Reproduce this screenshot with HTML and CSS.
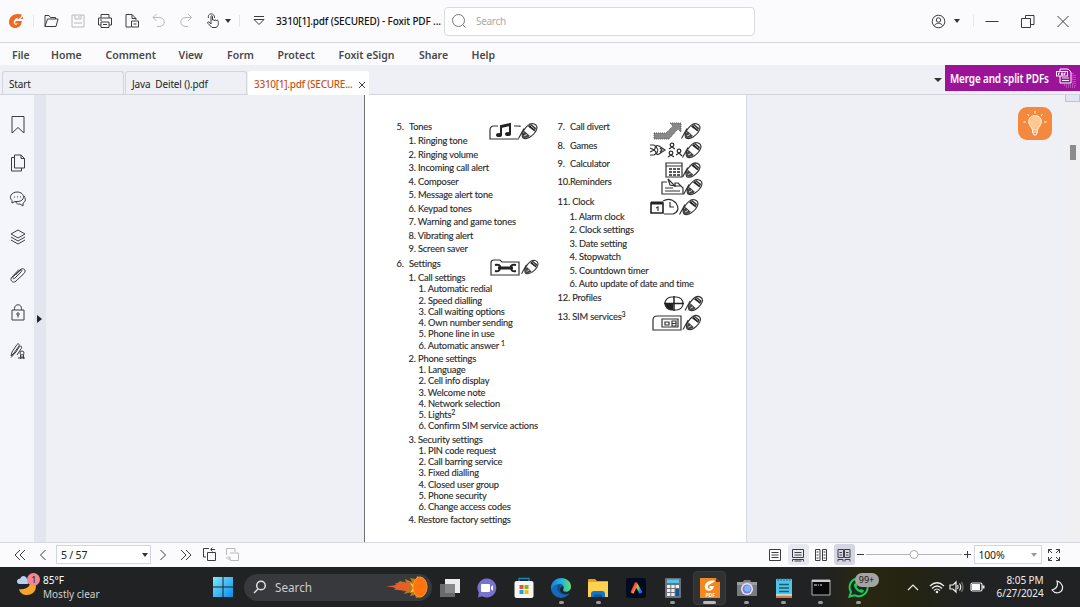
FILE: index.html
```html
<!DOCTYPE html>
<html lang="en">
<head>
<meta charset="utf-8">
<title>3310[1].pdf (SECURED) - Foxit PDF Reader</title>
<link rel="stylesheet" href="styles.css">
</head>
<body>
<svg class="defs" width="0" height="0">
  <symbol id="phone" viewBox="0 0 20 18">
    <path d="M0 17L7 5Q10 1 14 1Q19 1 19.500 6Q19 11 13 15Q9 18 4 17Z" fill="#fff"/>
    <path d="M.5 16.500L6 6.500M5 16Q3 13 6 8Q10 2 14 1.500Q19 2 19 6Q18 11 12 15Q8 17.500 5 16Z" fill="none" stroke="#333" stroke-width="1.200"/>
    <path d="M10 4.500L13 2L18 6L16.500 9.500Z" fill="#222"/>
    <path d="M4.500 15.500Q4 12 6.500 9L12 14Q8 17 4.500 15.500Z" fill="#444"/>
    <path d="M6 14L9 12.500M12.500 3.500L16.500 7" stroke="#fff" stroke-width=".8"/>
  </symbol>
</svg>

<header class="titlebar">
  <svg class="logo" width="16" height="16" viewBox="0 0 16 16"><path d="M14 1.500C7-.5 1 3 1 9c0 3.500 2.500 6 6 6 4 0 6-2 7-7H8L6.500 10.500H10C9 12 7.500 12 6.800 11.500 4.500 10 6 5.500 10 4.500L9 6.500C11 6 12.500 5 14 1.500Z" fill="#ee6a22"/><path d="M12.500 6L15 3.500V6Z" fill="#ee6a22"/></svg>
  <i class="sep"></i>
  <div class="tools">
    <svg class="ic" width="16" height="16" viewBox="0 0 16 16"><path d="M2 13.500V2.500H6L7.500 4.500H12.500V6M2 13.500L4.500 6H15L13 13.500Z"/></svg>
    <svg class="ic off" width="16" height="16" viewBox="0 0 16 16"><path d="M2 2H14V14H2ZM5 2V6H11V2M4 10H12M9 3V5"/></svg>
    <svg class="ic" width="16" height="16" viewBox="0 0 16 16"><path d="M4 5V1.500H12V5M4 12H1.500V5H14.500V12H12M4 9H12V14.500H4ZM3 7H5M6 11.500H10"/></svg>
    <svg class="ic" width="16" height="16" viewBox="0 0 16 16"><path d="M7 14H2V1.500H8L12 5.500V7M8 1.500V5.500H12M7.500 8H14.500V14H7.500ZM9.500 11H12.500"/></svg>
    <svg class="ic off" width="16" height="16" viewBox="0 0 16 16"><path d="M5.500 1L2 4.500 5.500 8M2 4.500H8C15 4.500 15 13.500 8 13.500H6"/></svg>
    <svg class="ic off" width="16" height="16" viewBox="0 0 16 16"><path d="M10 1L13.500 4.500 10 8M13.500 4.500H8C1 4.500 1 13.500 8 13.500H10"/></svg>
    <svg class="ic" width="16" height="16" viewBox="0 0 16 16"><path d="M6 11L4 9C3 8.500 2 9.500 3 10.500L7 14.500H11C14 13 13.500 10 13 7.500 12 6.500 11.500 7.500 11.500 8 11 6.500 9.500 6.500 9.500 8 9 6.500 7.500 6.500 7.500 7V3.500C7.500 2.500 6 2.500 6 3.500ZM3.500 5C2-.5 10-.5 9.500 5"/></svg>
  </div>
  <i class="caret"></i>
  <i class="sep s2"></i>
  <svg class="ic menu-ic" width="14" height="12" viewBox="0 0 14 12"><path d="M2 1.500H12M2 4.500L7 9.500 12 4.500Z"/></svg>
  <span class="doc-title">3310[1].pdf (SECURED) - Foxit PDF ...</span>
  <div class="search"><svg class="ic" width="16" height="16" viewBox="0 0 16 16"><circle cx="7.500" cy="7.500" r="6"/><path d="M12 12L14.500 14.500"/></svg><span>Search</span></div>
  <div class="window">
    <svg class="ic" width="15" height="15" viewBox="0 0 15 15"><circle cx="7.500" cy="7.500" r="6.300"/><circle cx="7.500" cy="6" r="2.200"/><path d="M3.500 11.500C5 8.500 10 8.500 11.500 11.500"/></svg>
    <i class="caret"></i><i class="sep"></i>
    <svg class="ic" width="14" height="15" viewBox="0 0 14 15"><path d="M.5 7.500H13.500"/></svg>
    <svg class="ic" width="15" height="15" viewBox="0 0 15 15"><path d="M1.500 4.500H10.500V13.500H1.500ZM5.500 4.500V1.500H14V10.500H10.500"/></svg>
    <svg class="ic" width="14" height="15" viewBox="0 0 14 15"><path d="M1.500 2L12.500 13M12.500 2L1.500 13"/></svg>
  </div>
</header>

<nav class="menu"><span>File</span><span>Home</span><span>Comment</span><span>View</span><span>Form</span><span>Protect</span><span>Foxit eSign</span><span>Share</span><span>Help</span></nav>

<div class="tabs">
  <div class="tab">Start</div>
  <div class="tab">Java&nbsp; Deitel ().pdf</div>
  <div class="tab active"><span>3310[1].pdf (SECURE...</span><svg class="ic" width="8" height="8" viewBox="0 0 8 8"><path d="M1 1L7 7M7 1L1 7"/></svg></div>
  <i class="caret"></i>
  <div class="promo"><span>Merge and split PDFs</span>
    <svg width="20" height="20" viewBox="0 0 20 20" fill="none" stroke="#fff"><path d="M4 1H12L15 4V15H4Z"/><path d="M17 5V17H7M19 7V19H9" stroke-dasharray="1 1" opacity=".5"/><rect x=".5" y="3.500" width="11" height="4.500" fill="#9b1399"/><path d="M2.500 7V5H4M5.500 5V7H7V5ZM8.500 7V5H10M6 10H13M6 12.500H13" stroke-width=".9"/></svg>
  </div>
</div>

<main class="work">
  <aside class="side">
    <svg class="ic" width="16" height="20" viewBox="0 0 16 20"><path d="M2 1.500H14V18L8 12.500 2 18Z"/></svg>
    <svg class="ic" width="16" height="20" viewBox="0 0 16 20"><path d="M4.500 2H11L14.500 5.500V15H4.500ZM11 2V5.500H14.500M4.500 4.500H1.500V18H11.500V15"/></svg>
    <svg class="ic" width="18" height="20" viewBox="0 0 18 20"><path d="M3 12V9.500C-1 6 3 1 8 1 16 1 17 10 9 10.500H6ZM5 6H6M8 6H9M11 6H12M15 5C18 9 15 12 14 12V15L11 13C9 13.500 7 12.500 7 11"/></svg>
    <svg class="ic" width="18" height="20" viewBox="0 0 18 20"><path d="M9 2L16 6 9 10 2 6ZM2 9L9 13 16 9M2 12L9 16 16 12"/></svg>
    <svg class="ic" width="18" height="20" viewBox="0 0 18 20"><path d="M12 6L6 12C4.500 13.500 3 12 4.500 10.500L11 4C14 1 18 4 15 7.500L7 15C4 18 0 14 3 11L10 3.500M12 6C13.500 4 12.500 3 11 4.500L6.500 9"/></svg>
    <svg class="ic" width="16" height="20" viewBox="0 0 16 20"><path d="M2 6H14V16H2ZM4.500 6V4.500C4.500-.5 11.500-.5 11.500 4.500V6M8 11V13.500"/><circle cx="8" cy="10" r="1.200"/></svg>
    <svg class="ic" width="18" height="20" viewBox="0 0 18 20"><path d="M2 14L3 10 8 2.500C9 1 11 2 10 4L5 11ZM2 15.500L7 10 10.500 4.500C13 3 13 6 12 7L8 13"/><circle cx="13" cy="11" r="2"/><path d="M11.500 13V16.500L13 14.500 14.500 16.500V13M9 16H16"/></svg>
  </aside>
  <div class="strip"><i></i></div>
  <div class="canvas">
    <article class="page">
      <section class="col left">
        <div class="h"><b>5.</b>Tones
          <svg class="fig f1" width="50" height="18" viewBox="0 0 50 18"><path d="M31 5V4H25M9 4H5Q1 4 1 8V17H30" class="ln"/><path d="M12 13V4L21 2V12M12 5L21 3" stroke="#222" stroke-width="2" fill="none"/><ellipse cx="10" cy="13" rx="3" ry="2"/><ellipse cx="19" cy="12" rx="3" ry="2"/><use href="#phone" x="29" width="20" height="18"/></svg></div>
        <ol class="l2"><li>1. Ringing tone</li><li>2. Ringing volume</li><li>3. Incoming call alert</li><li>4. Composer</li><li>5. Message alert tone</li><li>6. Keypad tones</li><li>7. Warning and game tones</li><li>8. Vibrating alert</li><li>9. Screen saver</li></ol>
        <div class="h tall"><b>6.</b>Settings
          <svg class="fig f2" width="50" height="17" viewBox="0 0 50 17"><path d="M1 16V4Q1 1 4 1H10L12 3H29V16Z" class="ln"/><path d="M8 9H23" stroke="#222" stroke-width="3"/><path d="M5 6Q11 5 10 9Q10 13 5 12M26 6Q20 5 21 9Q21 13 26 12" stroke="#222" stroke-width="2" fill="none"/><use href="#phone" x="30" width="20" height="16"/></svg></div>
        <div class="sub">1. Call settings</div>
        <ol class="l3"><li>1. Automatic redial</li><li>2. Speed dialling</li><li>3. Call waiting options</li><li>4. Own number sending</li><li>5. Phone line in use</li><li>6. Automatic answer <sup>1</sup></li></ol>
        <div class="sub">2. Phone settings</div>
        <ol class="l3"><li>1. Language</li><li>2. Cell info display</li><li>3. Welcome note</li><li>4. Network selection</li><li>5. Lights<sup>2</sup></li><li>6. Confirm SIM service actions</li></ol>
        <div class="sub">3. Security settings</div>
        <ol class="l3"><li>1. PIN code request</li><li>2. Call barring service</li><li>3. Fixed dialling</li><li>4. Closed user group</li><li>5. Phone security</li><li>6. Change access codes</li></ol>
        <div class="sub">4. Restore factory settings</div>
      </section>
      <section class="col right">
        <div class="h"><b>7.</b>Call divert
          <svg class="fig g1" width="50" height="18" viewBox="0 0 50 18"><path d="M1 11H13L20 4L17 1H28V10L25 7L16 17H1Z" fill="#888" stroke="#555" stroke-dasharray="1 1"/><use href="#phone" x="28" width="20" height="18"/></svg></div>
        <div class="h m4"><b>8.</b>Games
          <svg class="fig g2" width="54" height="18" viewBox="0 0 54 18"><path d="M1 4H5Q8 5 5 9Q9 12 5 14H1M1 7L5 9 1 11M9 9Q5 3 10 5L16 9 10 13Q6 15 9 9M11 7L13 9 11 11" class="ln"/><g fill="none" stroke="#333" stroke-width="1.300"><circle cx="23" cy="4" r="1.800"/><path d="M20 8L23 6 26 8"/><circle cx="22" cy="12" r="1.800"/><path d="M19 16L22 14 25 16"/><circle cx="30" cy="10" r="1.800"/><path d="M27 14L30 12 33 15"/></g><use href="#phone" x="33" width="20" height="18"/></svg></div>
        <div class="h m3"><b>9.</b>Calculator
          <svg class="fig g3" width="38" height="18" viewBox="0 0 38 18"><path d="M1 2H17V16H1ZM1 5H17" class="ln"/><path d="M4 8H15M4 11H15M4 14H15" stroke="#222" stroke-width="1.500" stroke-dasharray="3 1"/><use href="#phone" x="17" width="19" height="18"/></svg></div>
        <div class="h m35"><b>10.</b>Reminders
          <svg class="fig g4" width="44" height="18" viewBox="0 0 44 18"><path d="M6 4H1V16H22V10L17 5H14V8H20M4 10H12M4 13H19" class="ln"/><path d="M7 1L14 8L9 7Z" class="ln"/><use href="#phone" x="22" width="20" height="18"/></svg></div>
        <div class="h m5"><b>11.</b>&nbsp;Clock
          <svg class="fig g5" width="52" height="18" viewBox="0 0 52 18"><path d="M1 5H13V15H1Z" fill="none" stroke="#222" stroke-width="1.600"/><path d="M1 5H13" stroke="#222" stroke-width="3"/><path d="M6 10L8 9V13M13 3Q20-1 26 5Q31 13 23 16H14M20 4V9H24" class="ln"/><use href="#phone" x="29" width="20" height="18"/></svg></div>
        <ol class="l2"><li>1. Alarm clock</li><li>2. Clock settings</li><li>3. Date setting</li><li>4. Stopwatch</li><li>5. Countdown timer</li><li>6. Auto update of date and time</li></ol>
        <div class="h"><b>12.</b>&nbsp;Profiles
          <svg class="fig g6" width="42" height="17" viewBox="0 0 42 17"><rect x="1" y="2" width="18" height="13" rx="6.500" class="ln"/><path d="M1 9H9V15Q2 15 1 9"/><path d="M10 1V16M0 8.500H20" stroke="#222" stroke-width="1.500"/><use href="#phone" x="20" width="20" height="17"/></svg></div>
        <div class="h m4"><b>13.</b>&nbsp;SIM services<sup>3</sup>
          <svg class="fig g7" width="52" height="17" viewBox="0 0 52 17"><path d="M1 16V6Q1 2 5 2H29V16ZM10 5H26V13H10Z" class="ln"/><path d="M13 8H17V11H13ZM20 7H24V12H20ZM20 9.500H24" class="ln"/><use href="#phone" x="30" width="20" height="17"/></svg></div>
      </section>
    </article>
    <div class="hint"><svg width="34" height="33" viewBox="0 0 34 33"><path d="M17 8.500C10 8.500 9 16 13 20L14.500 23H19.500L21 20C25 16 24 8.500 17 8.500Z" fill="#ffc891" stroke="#fff" stroke-width=".8"/><path d="M14.500 23V25L16 28H18L19.500 25V23M14.500 25H19.500M17 4V6.500M9.500 7L11 9M24.500 7L23 9M5.500 15H8M26 15H28.500" fill="none" stroke="#fff"/></svg></div>
  </div>
  <div class="scroll"><i class="top"></i><i class="thumb"></i></div>
</main>

<footer class="status">
  <svg class="ic" width="12" height="14" viewBox="0 0 12 14"><path d="M6 2L1 7 6 12M11 2L6 7 11 12"/></svg>
  <svg class="ic p2" width="8" height="14" viewBox="0 0 8 14"><path d="M6.500 2L1.500 7 6.500 12"/></svg>
  <div class="box pages">5 / 57<i class="caret"></i></div>
  <svg class="ic p3" width="8" height="14" viewBox="0 0 8 14"><path d="M1.500 2L6.500 7 1.500 12"/></svg>
  <svg class="ic p4" width="12" height="14" viewBox="0 0 12 14"><path d="M1 2L6 7 1 12M6 2L11 7 6 12"/></svg>
  <svg class="ic p5" width="15" height="15" viewBox="0 0 15 15"><path d="M5.500 5.500H13.500V13.500H5.500ZM4 10H1.500V1.500H7M13 2.500H9M10.500 .5L8.500 2.500 10.500 4.500"/></svg>
  <svg class="ic off p6" width="15" height="15" viewBox="0 0 15 15"><path d="M5 6H13.500V13.500H5.500V12M1.500 8V1.500H10V5M1 11H5M3.500 9L5.500 11 3.500 13"/></svg>
  <div class="views">
    <i><svg class="ic" width="14" height="14" viewBox="0 0 14 14"><path d="M1.500 1.500H12.500V12.500H1.500ZM3.500 4.500H10.500M3.500 7H10.500M3.500 9.500H10.500"/></svg></i>
    <i class="soft"><svg class="ic" width="14" height="14" viewBox="0 0 14 14"><path d="M1.500 1.500H12.500V9.500H1.500ZM3.500 4.500H10.500M3.500 7H10.500M1.500 13.500V11.500H12.500V13.500M3.500 13H10.500"/></svg></i>
    <i><svg class="ic" width="14" height="14" viewBox="0 0 14 14"><path d="M1.500 1.500H6V12.500H1.500ZM8.500 1.500H12.500V12.500H8.500ZM2.500 4H4.500M2.500 7H4.500M2.500 10H4.500M9.500 4H11.500M9.500 7H11.500M9.500 10H11.500"/></svg></i>
    <i class="on"><svg class="ic" width="14" height="14" viewBox="0 0 14 14"><path d="M1 1.500H6.500V9.500H1ZM7.500 1.500H13V9.500H7.500ZM2.500 4.500H5M2.500 7H5M9 4.500H11.500M9 7H11.500M1 13.500V11.500H6V13.500M8 13.500V11.500H13V13.500"/></svg></i>
  </div>
  <svg class="ic zoom" width="116" height="14" viewBox="0 0 116 14"><path d="M1 6.500H8M108 6.500H115M111.500 3V10"/><path d="M10 6.500H106" stroke="#b4b4bc"/><circle cx="58" cy="6.500" r="4" fill="#fff" stroke="#aaa"/></svg>
  <div class="box percent">100%<i class="caret"></i></div>
  <svg class="ic full" width="14" height="14" viewBox="0 0 14 14"><path d="M5 5L1.500 1.500V5M1.500 1.500H5M9 5L12.500 1.500V5M12.500 1.500H9M5 9L1.500 12.500V9M1.500 12.500H5M9 9L12.500 12.500V9M12.500 12.500H9"/></svg>
</footer>

<div class="taskbar">
  <div class="weather">
    <svg width="24" height="24" viewBox="0 0 24 24"><path d="M3 16C10 17 15 14 15 6 23 10 21 22 11 22 7 22 4 20 3 16Z" fill="#f5a52a"/><path d="M3 11C-1 9 2 5 4 6 5 2 10 2 11 6 14 6 14 11 11 11Z" fill="#b7cff5"/><circle cx="17.500" cy="6.500" r="6.500" fill="#f58690"/><text x="15.300" y="10" class="n1">1</text></svg>
    <div><p class="temp">85°F</p><p>Mostly clear</p></div>
  </div>
  <svg class="win" width="20" height="20" viewBox="0 0 20 20"><defs><linearGradient id="w" x2="1" y2="1"><stop stop-color="#7deaff"/><stop offset="1" stop-color="#0a8bea"/></linearGradient></defs><path d="M0 0H9.500V9.500H0ZM10.500 0H20V9.500H10.500ZM0 10.500H9.500V20H0ZM10.500 10.500H20V20H10.500Z" fill="url(#w)"/></svg>
  <div class="find">
    <svg width="14" height="14" viewBox="0 0 14 14" fill="none" stroke="#e0e0e0" stroke-width="1.500"><circle cx="8" cy="5.500" r="4.300"/><path d="M5 9L1 13"/></svg><span>Search</span>
    <svg class="comet" width="44" height="24" viewBox="0 0 44 24"><path d="M8 12L15 6 21 8 20 4 27 7 25 3 31 4 32 1 37 3V22L31 23 30 20 25 21 27 17 19 19 21 16 13 15Z" fill="#d58b1e" opacity=".8"/><path d="M1 11.500L12 10 10 8 20 9 18 6 26 11 18 17 20 14 9 15 12 12.500Z" fill="#ef5a2b"/><path d="M25 8L30 10V16L25 18 28 13Z" fill="#ffc233"/><ellipse cx="35" cy="12" rx="7" ry="10" fill="#ff7410" stroke="#ff9a22"/></svg>
  </div>
  <div class="apps">
    <span><svg width="22" height="22" viewBox="0 0 22 22"><path d="M6 2H21V16H6Z" fill="#ececec"/><path d="M1 7H16V20H1Z" fill="#777" opacity=".85"/></svg></span>
    <span><svg width="22" height="22" viewBox="0 0 22 22"><path d="M11 1.500A9.500 9.500 0 1 1 6 19.200L2 20.500 2.800 15.800A9.500 9.500 0 0 1 11 1.500Z" fill="#7773ce"/><rect x="5" y="7" width="9" height="8" rx="1" fill="#fff"/><path d="M15 10L17 8V14L15 12Z" fill="#fff"/></svg></span>
    <span><svg width="22" height="22" viewBox="0 0 22 22"><path d="M6 5V1.500H16V5" fill="none" stroke="#1687be" stroke-width="1.300"/><rect x="1.500" y="4" width="19" height="17" rx="2" fill="#f5f5f5"/><path d="M6.500 8H10.500V12H6.500Z" fill="#ef5024"/><path d="M11.500 8H15.500V12H11.500Z" fill="#7eb91b"/><path d="M6.500 13H10.500V17H6.500Z" fill="#16a2e7"/><path d="M11.500 13H15.500V17H11.500Z" fill="#f7b919"/></svg></span>
    <span class="run"><svg width="22" height="22" viewBox="0 0 22 22"><defs><linearGradient id="e"><stop stop-color="#1683d4"/><stop offset=".5" stop-color="#22b3dd"/><stop offset="1" stop-color="#65dd65"/></linearGradient></defs><circle cx="11" cy="11" r="10" fill="#136ab8"/><path d="M1 11C1-1 20-2 21 9 21 16 14 15 13 13 15 10 13 6 9 7 5 7 1 10 1 15Z" fill="url(#e)"/><path d="M9 7C5 9 7 18 15 18 18 18 19 17 20 15 12 18 8 12 11 8Z" fill="#174d92"/><path d="M12 9C15 10 12 13 13.500 14.500 16 16 19 15 21 12V16L15 17C9 16 9 11 12 9Z" fill="#202224"/></svg></span>
    <span class="run"><svg width="22" height="22" viewBox="0 0 22 22"><path d="M1 3Q1 2 2 2H8L10 4H21V20H1Z" fill="#e7a019"/><path d="M1 5H21V20H1Z" fill="#ffd150"/><path d="M4 20V17Q4 14 7 14H15Q18 14 18 17V20Z" fill="#1276c5"/><path d="M7 17.500H15V20H7Z" fill="#0b559c"/></svg></span>
    <span><svg width="22" height="22" viewBox="0 0 22 22"><defs><linearGradient id="r" x2="1" y2=".6"><stop stop-color="#f23ac8"/><stop offset=".3" stop-color="#ff4433"/><stop offset=".55" stop-color="#ffa321"/><stop offset=".75" stop-color="#45d66c"/><stop offset="1" stop-color="#3566ff"/></linearGradient></defs><rect x="1" y="1" width="20" height="20" rx="3" fill="#020a20"/><path d="M7 16L11 7 16 16" fill="none" stroke="url(#r)" stroke-width="3.300" stroke-linejoin="round"/></svg></span>
    <span class="run"><svg width="22" height="22" viewBox="0 0 22 22"><rect x="3" y="1" width="16" height="20" rx="1" fill="#6d7278"/><path d="M5 2.500H17V6H5Z" fill="#52c7ed"/><path d="M5 8H8.300V11H5ZM9.300 8H12.600V11H9.300ZM13.600 8H17V11H13.600ZM5 12H8.300V15H5ZM9.300 12H12.600V15H9.300ZM5 16H8.300V19H5ZM9.300 16H12.600V19H9.300Z" fill="#eee"/><path d="M13.600 12H17V19H13.600Z" fill="#15539b"/></svg></span>
    <span class="run current"><svg width="22" height="22" viewBox="0 0 22 22"><path d="M1 1H17L21 5V21H1Z" fill="#f28820"/><path d="M17 1V5H21Z" fill="#573815"/><path d="M16 4C9 2 5 7 6 11 7 15 14 15 15 9H11L10 11H12C10 13 8 11 9 9 10 7 13 7 16 4Z" fill="#fff"/><text x="6.500" y="20" class="pdf">PDF</text></svg></span>
    <span class="run"><svg width="22" height="22" viewBox="0 0 22 22"><path d="M1 5H7L8 3H14L15 5H21V19H1Z" fill="#777c82"/><path d="M1 5H21V8H1Z" fill="#9a9ea2"/><circle cx="11" cy="12" r="6" fill="#e8e8f4"/><circle cx="11" cy="12" r="4.500" fill="#8175df"/><circle cx="11.500" cy="11.500" r="3.200" fill="#7fb7f6"/></svg></span>
    <span class="run"><svg width="22" height="22" viewBox="0 0 22 22"><path d="M3 2H19V19H3Z" fill="#52c4e7"/><path d="M3 18H19V21H3Z" fill="#e5752d"/><path d="M3 18H19" stroke="#fff"/><path d="M5 1V4M8 1V4M11 1V4M14 1V4M17 1V4" stroke="#176882"/><path d="M6 7.500H16M6 11H16M6 14.500H16" stroke="#115d76" stroke-width="1.300"/></svg></span>
    <span class="run"><svg width="22" height="22" viewBox="0 0 22 22"><path d="M2 3H20V18H2Z" fill="#080808" stroke="#b4b4b4"/><path d="M2 4H20" stroke="#ccc" stroke-width="2"/><path d="M4 8H7M8 8H9M10 8H12" stroke="#eee"/></svg></span>
    <span class="run"><svg width="22" height="22" viewBox="0 0 22 22"><path d="M2.500 19.500L4 15A9 9 0 1 1 7.500 18.200Z" fill="#182c20" stroke="#20c85b" stroke-width="2"/><path d="M7 7L9 6 10.500 9 9.500 10Q11 12 13 13L14 12 17 13.500 16 15.500C12 17 6 11 7 7Z" fill="#20c85b"/></svg><em>99+</em></span>
  </div>
  <svg class="tray" width="80" height="16" viewBox="0 0 80 16" fill="none" stroke="#eee" stroke-width="1.200"><path d="M1 11L6 6 11 11"/><path d="M23 7Q30 .5 37 7M25 9.500Q30 4.500 35 9.500M27 11.500Q30 8.500 33 11.500"/><circle cx="30" cy="13" r=".7"/><path d="M43 6H46L49 3V13L46 10H43ZM50.500 6Q52 8 50.500 10M52.500 4.500Q55 8 52.500 11.500"/><path d="M54.500 3Q57.500 8 54.500 13" stroke="#777"/><rect x="64" y="4" width="11" height="8" rx="1.500"/><rect x="65" y="5" width="8" height="6" fill="#fff" stroke="none"/><path d="M76.500 6.500V9.500" stroke-width="2"/></svg>
  <div class="clock"><p>8:05 PM</p><p>6/27/2024</p></div>
  <svg class="moon" width="13" height="14" viewBox="0 0 13 14"><path d="M6 1Q8 8 1 10Q4 14 8 12.500Q12 11 11.500 6.500Q10 2 6 1Z" fill="none" stroke="#eee" stroke-width="1.200"/></svg>
</div>
</body>
</html>
```
FILE: styles.css
```css
* { box-sizing: border-box; }
body { margin: 0; width: 1080px; height: 607px; overflow: hidden; display: flex; flex-direction: column; background: #fbfbfe; font: 10px/14px "Noto Sans", sans-serif; color: #222; }
p, ol { margin: 0; padding: 0; list-style: none; }
svg { flex: none; display: block; }
.defs { position: absolute; }
.ic { fill: none; stroke: #3c3c40; stroke-width: 1; }
.off { stroke: #b8b8bd; }
.caret { flex: none; border: 3px solid transparent; border-top: 4px solid #333; border-bottom: 0; width: 0; height: 0; }
.sep { flex: none; width: 1px; height: 12px; background: #e5e5ea; }

.titlebar { flex: none; height: 43px; border-bottom: 1px solid #d5d5dd; display: flex; align-items: center; }
.logo { margin-left: 8px; }
.titlebar > .sep { margin-left: 9px; }
.tools { display: grid; grid-template-columns: repeat(7, 27px); justify-items: center; margin-left: 3px; width: 189px; }
.titlebar > .caret { margin-left: -1px; }
.titlebar > .s2 { margin-left: 8px; }
.menu-ic { margin-left: 12px; }
.doc-title { width: 174px; margin-left: 10px; white-space: nowrap; font-weight: 500; color: #111; font-size: 10px; letter-spacing: -.15px; }
.search { flex: none; width: 311px; height: 29px; margin-left: -6px; border: 1px solid #d9d9df; border-radius: 4px; background: #fff; display: flex; align-items: center; padding-left: 6px; gap: 9px; color: #aaa; letter-spacing: -.3px; }
.search .ic { stroke: #777; }
.window { margin-left: 176px; display: flex; align-items: center; }
.window .caret { margin-left: 8px; }
.window .sep { margin: 0 11px 0 13px; }
.window .ic + .ic { margin-left: 21px; }

.menu { flex: none; height: 22px; padding-left: 12px; display: grid; grid-template-columns: 39px 54.500px 73px 48.500px 50.500px 61px 80.500px 52.500px 40px; align-items: center; white-space: nowrap; font-size: 10.500px; font-weight: 600; color: #48484c; padding-top: 2px; }

.tabs { flex: none; height: 30px; background: #eff0f5; border-bottom: 1px solid #d2d4de; display: flex; align-items: flex-end; padding-left: 2px; }
.tab { width: 122px; height: 23px; margin-right: 1px; border: 1px solid #d2d4de; border-bottom: 0; border-radius: 3px 3px 0 0; padding: 5px 6px 0; white-space: nowrap; letter-spacing: -.15px; }
.active { width: 121px; height: 24px; margin-bottom: -1px; background: #fff; border-color: #fff; color: #c65522; display: flex; gap: 7px; padding-left: 5px; }
.active span { width: 97px; font-weight: 500; letter-spacing: -.27px; }
.active svg { margin-top: 4px; }
.tabs > .caret { margin: 0 3px 12px auto; border-width: 4px 4px 0; }
.promo { width: 135px; height: 26px; align-self: flex-start; background: #9b1399; color: #fff; display: flex; align-items: center; padding-left: 5px; gap: 8px; }
.promo span { width: 98px; white-space: nowrap; font: 600 13px/20px "Noto Sans", sans-serif; letter-spacing: -.2px; transform: scaleX(.765); transform-origin: left; }

.work { flex: none; height: 447px; display: flex; }
.side { width: 34px; background: #f5f6fb; padding: 20px 0 0 1px; display: flex; flex-direction: column; align-items: center; gap: 17.800px; }
.strip { width: 12px; background: #e3e6ee; padding: 220px 0 0 3px; }
.strip i { display: block; width: 0; height: 0; border: 4px solid transparent; border-left: 5px solid #222; border-right: 0; }
.canvas { width: 1019px; background: #eff0f5; display: flex; }
.page { flex: none; width: 383px; margin-left: 318px; background: #fff; border-left: 1px solid #707074; border-right: 1px solid #d9dae0; display: flex; font: 9.300px/13.500px Lato, sans-serif; letter-spacing: -.16px; font-variant-ligatures: none; -webkit-text-stroke: .12px #292929; color: #292929; white-space: nowrap; padding-top: 24px; }
.left { width: 161px; padding-left: 31.500px; }
.right { width: 180px; padding-left: 31.500px; }
.h { display: flex; align-items: center; height: 15px; }
.h b { font-weight: 400; width: 12.500px; flex: none; }
.tall { height: 15.500px; }
.m3 { margin-top: 3px; } .m35 { margin-top: 3.500px; } .m4 { margin-top: 4px; } .m5 { margin-top: 5px; }
.fig { fill: #222; -webkit-text-stroke: 0; }
.ln { fill: none; stroke: #333; stroke-width: 1.200; }
.f1 { margin: 8px -13px 0 auto; } .f2 { margin: 9px -14px 0 auto; }
.g1 { margin: 8px 3px 0 auto; } .g2 { margin: 9px 3px 0 auto; } .g3 { margin: 12px 3px 0 auto; } .g4 { margin: 10px 1px 0 auto; } .g5 { margin: 10px 4px 0 auto; } .g6 { margin: 11px 0 0 auto; } .g7 { margin: 10px 2px 0 auto; }
.l2 { padding-left: 12px; }
.sub { padding-left: 12px; height: 13px; line-height: 13px; }
.l3 { padding-left: 22px; line-height: 11.300px; margin: -.8px 0 .8px; }
.l3 li { height: 11.300px; }
sup { font-size: 7px; line-height: 0; vertical-align: 3px; }
.h sup { align-self: flex-start; line-height: 9px; }
.hint { width: 34px; height: 33px; margin: 12px 0 0 271px; border-radius: 9px; background: #f4883d; }
.scroll { width: 15px; background: #f0f0f2; display: flex; flex-direction: column; }
.scroll .top { height: 7px; background: #e3e6f0; border: 1px solid #b9c4d6; border-top: 0; }
.scroll .thumb { width: 6px; height: 15px; margin: 43px 0 0 5px; background: #8b8b8b; }

.status { flex: none; height: 25px; border-top: 1px solid #d7d8e0; display: flex; align-items: center; padding: 0 0 1px 14px; }
.p2 { margin-left: 13px; }
.box { height: 19px; border: 1px solid #d5d5de; background: #fff; display: flex; align-items: center; justify-content: space-between; padding: 0 2px 0 4px; font-size: 10.500px; letter-spacing: -.2px; }
.pages { width: 95px; margin-left: 9px; }
.p3 { margin-left: 8px; } .p4 { margin-left: 13px; } .p5 { margin-left: 10px; } .p6 { margin-left: 8px; }
.views { display: grid; grid-template-columns: repeat(4, 23px); justify-items: center; margin-left: 523.500px; }
.views i { width: 21px; height: 21px; border-radius: 3px; display: grid; place-items: center; }
.views .soft { background: #e7e8f0; } .views .on { background: #d5d5e3; }
.zoom { margin-left: 0; }
.percent { width: 68px; margin-left: 2px; padding-right: 4px; }
.percent .caret { border-top-color: #999; }
.full { margin-left: 5px; }

.taskbar { flex: none; height: 40px; background: linear-gradient(90deg, #202224 0 76%, #292711 80%, #242411 84%, #202224 90%); color: #eee; display: flex; align-items: center; }
.weather { display: flex; width: 213px; padding-left: 16px; gap: 3px; }
.weather p { height: 14px; color: #d0d0d0; white-space: nowrap; }
.weather .temp { color: #fff; }
.n1 { font: 9px "Noto Sans", sans-serif; fill: #222; }
.find { flex: none; width: 187.500px; height: 27px; margin-left: 11px; border-radius: 14px; background: #38393c; display: flex; align-items: center; padding-left: 9px; gap: 8px; color: #ccc; font-size: 11.700px; }
.find > span { width: 36px; }
.comet { margin-left: 66px; }
.apps { display: grid; grid-template-columns: repeat(12, 37.100px); flex: none; }
.apps span { position: relative; height: 40px; display: grid; place-items: center; padding-top: 2px; }
.run::after { content: ""; position: absolute; bottom: 3px; left: 50%; margin-left: -2.500px; width: 5px; height: 3px; border-radius: 2px; background: #999; }
.current::before { content: ""; position: absolute; inset: 4px 2px 2px; border: 1px solid #3c3c3e; border-radius: 4px; background: #303133; }
.current svg { position: relative; }
.current::after { width: 13px; margin-left: -6.500px; background: #bbb; }
.pdf { font: 700 5px "Noto Sans", sans-serif; fill: #fff; }
.apps em { position: absolute; left: 15px; top: 6px; width: 24px; height: 14px; border-radius: 7px; background: #a4a4a4; color: #171717; font: 9px/14px "Noto Sans", sans-serif; text-align: center; }
.tray { margin-left: 30px; }
.clock { width: 57px; text-align: right; font-size: 10px; line-height: 13px; letter-spacing: -.05px; }
.moon { margin-left: 7px; }
```
